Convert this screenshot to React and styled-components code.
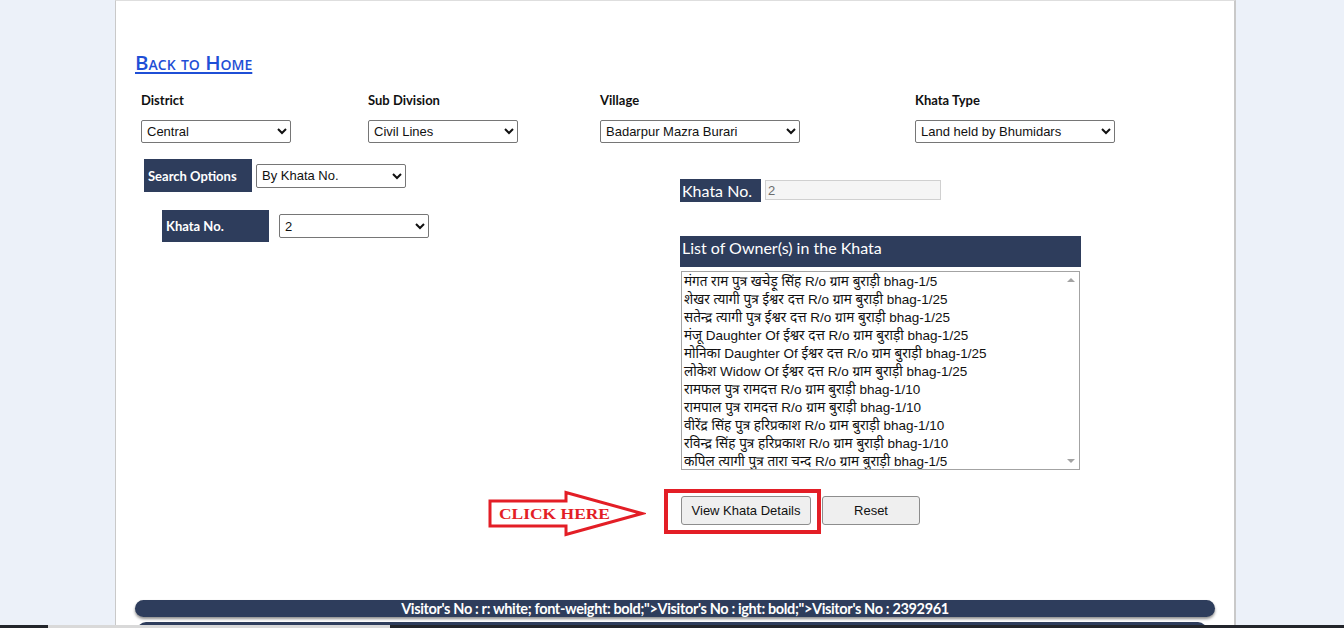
import React from 'react';
import styled, { createGlobalStyle } from 'styled-components';

const GlobalStyle = createGlobalStyle`
  html, body { margin:0; padding:0; background:#ecf1f9; }
  body { font-family: "Liberation Sans", Arial, sans-serif; overflow:hidden; }
`

const Page = styled.div`
  margin-left:115px;
  width:1080px;
  min-height:640px;
  background:#fff;
  border-left:1px solid #c9c9c9;
  border-right:2px solid #c9c9c9;
  border-top:1px solid #dedede;
  padding:48px 19px 0 19px;
  box-sizing:content-box;
`

const BackLink = styled.a`
  display:inline-block;
  font-family: "Open Sans", sans-serif;
  font-variant: small-caps;
  font-weight:600;
  font-size:20.5px;
  line-height:26px;
  color:#1f4fd6;
  text-decoration:underline;
  text-underline-offset:2px;
`

const FilterGrid = styled.div`
  display:grid;
  grid-template-columns:227px 232px 315px 1fr;
  padding-left:6px;
  margin-top:17px;
`

const FieldLabel = styled.div`
  font-family: Lato, sans-serif;
  font-weight:700;
  font-size:13px;
  line-height:16px;
  color:#111;
  margin-bottom:12px;
`

const Select = styled.select`
  width:${p => p.$w || 150}px;
  height:${p => p.$h || 23}px;
  font-family: "Liberation Sans", Arial, sans-serif;
  font-size:13px;
  color:#111;
  background:#fff;
  border:1px solid #767676;
  border-radius:2px;
  padding:0 1px;
`

const Lower = styled.div`
  display:grid;
  grid-template-columns:540px 1fr;
  margin-top:16px;
`

const LeftCol = styled.div`
  display:flex;
  flex-direction:column;
`

const OptionRow = styled.div`
  display:flex;
  align-items:center;
  gap:${p => p.$gap}px;
  padding-left:${p => p.$indent}px;
  margin-top:${p => p.$top || 0}px;
`

const DarkTag = styled.div`
  width:${p => p.$w}px;
  height:${p => p.$h}px;
  box-sizing:border-box;
  background:#2e3d5c;
  color:#fff;
  font-family: Lato, sans-serif;
  font-weight:700;
  font-size:13px;
  display:flex;
  align-items:center;
  padding-left:4px;
`

const RightCol = styled.div`
  display:flex;
  flex-direction:column;
  padding-left:5px;
  padding-top:20px;
`

const KhataRow = styled.div`
  display:flex;
  align-items:flex-start;
  gap:4px;
`

const HeadTag = styled.div`
  width:${p => p.$w}px;
  height:${p => p.$h}px;
  background:#2e3d5c;
  color:#fff;
  font-family: Lato, sans-serif;
  font-size:16px;
  line-height:${p => p.$lh || 24}px;
  padding-left:2px;
  box-sizing:border-box;
  margin-top:${p => p.$top || 0}px;
`

const TextInput = styled.input`
  width:176px;
  height:20px;
  box-sizing:border-box;
  margin-top:1px;
  border:1px solid #d0d0d0;
  background:#f5f5f5;
  color:#6d6d6d;
  font-family: "Liberation Sans", Arial, sans-serif;
  font-size:13px;
  padding:0 2px;
`

const ListBox = styled.div`
  margin:4px 0 0 1px;
  width:399px;
  height:199px;
  box-sizing:border-box;
  border:1px solid #a3a3a3;
  display:flex;
  background:#fff;
  overflow:hidden;
`

const Items = styled.div`
  flex:1;
  padding:1px 0 0 2px;
`

const Item = styled.div`
  font-family: "Liberation Sans", "Noto Sans Devanagari", "Noto Sans", sans-serif;
  font-size:13.5px;
  line-height:18px;
  color:#111;
  white-space:nowrap;
`

const Rail = styled.div`
  width:16px;
  display:flex;
  flex-direction:column;
  justify-content:space-between;
  align-items:center;
  padding:6px 0;
`

const Tri = styled.div`
  width:0; height:0;
  border-left:4px solid transparent;
  border-right:4px solid transparent;
  ${p => p.$down ? 'border-top:4px solid #a3a3a3;' : 'border-bottom:4px solid #a3a3a3;'}
`

const ButtonRow = styled.div`
  position:relative;
  display:flex;
  gap:11px;
  margin:26px 0 0 1px;
`

const Button = styled.button`
  width:${p => p.$w}px;
  height:29px;
  background:#efefef;
  border:1px solid #8d8d8d;
  border-radius:3px;
  font-family: "Liberation Sans", Arial, sans-serif;
  font-size:13px;
  color:#111;
  position:relative;
  z-index:1;
`

const Highlight = styled.div`
  position:absolute;
  left:-17px;
  top:-7px;
  width:157px;
  height:45px;
  box-sizing:border-box;
  border:4px solid #e31e26;
  z-index:2;
  pointer-events:none;
`

const Arrow = styled.svg`
  position:absolute;
  left:-193px;
  top:-6px;
`

const VisitorBar = styled.div`
  margin-top:75px;
  height:17px;
  border-radius:9px;
  background:#2e3d5c;
  box-shadow:0 2px 3px rgba(0,0,0,0.45);
  color:#fff;
  font-family: Lato, sans-serif;
  font-weight:700;
  font-size:14.5px;
  line-height:17px;
  text-align:center;
  letter-spacing:-0.35px;
  white-space:nowrap;
`

const NextBar = styled.div`
  margin:5px 8px 0 2px;
  height:17px;
  border-radius:9px 9px 0 0;
  background:#2e3d5c;
`

const TaskStrip = styled.div`
  position:fixed;
  left:0; right:0; bottom:0;
  height:3px;
  display:flex;
  background:#22252b;
  span{ margin-left:48px; width:342px; background:#d9d9d9; }
`

const owners = [
  'मंगत राम पुत्र खचेड़ू सिंह R/o ग्राम बुराड़ी bhag-1/5',
  'शेखर त्यागी पुत्र ईश्वर दत्त R/o ग्राम बुराड़ी bhag-1/25',
  'सतेन्द्र त्यागी पुत्र ईश्वर दत्त R/o ग्राम बुराड़ी bhag-1/25',
  'मंजू Daughter Of ईश्वर दत्त R/o ग्राम बुराड़ी bhag-1/25',
  'मोनिका Daughter Of ईश्वर दत्त R/o ग्राम बुराड़ी bhag-1/25',
  'लोकेश Widow Of ईश्वर दत्त R/o ग्राम बुराड़ी bhag-1/25',
  'रामफल पुत्र रामदत्त R/o ग्राम बुराड़ी bhag-1/10',
  'रामपाल पुत्र रामदत्त R/o ग्राम बुराड़ी bhag-1/10',
  'वीरेंद्र सिंह पुत्र हरिप्रकाश R/o ग्राम बुराड़ी bhag-1/10',
  'रविन्द्र सिंह पुत्र हरिप्रकाश R/o ग्राम बुराड़ी bhag-1/10',
  'कपिल त्यागी पुत्र तारा चन्द R/o ग्राम बुराड़ी bhag-1/5',
]

const filters = [
  { label:'District', value:'Central', w:150 },
  { label:'Sub Division', value:'Civil Lines', w:150 },
  { label:'Village', value:'Badarpur Mazra Burari', w:200 },
  { label:'Khata Type', value:'Land held by Bhumidars', w:200 },
]

const App = () => {
  return (
    <>
      <GlobalStyle />
      <Page>
        <BackLink href="#">Back to Home</BackLink>

        <FilterGrid>
          {filters.map(f => (
            <div key={f.label}>
              <FieldLabel>{f.label}</FieldLabel>
              <Select $w={f.w} defaultValue={f.value}>
                <option>{f.value}</option>
              </Select>
            </div>
          ))}
        </FilterGrid>

        <Lower>
          <LeftCol>
            <OptionRow $indent={9} $gap={4}>
              <DarkTag $w={108} $h={33}>Search Options</DarkTag>
              <Select $h={24} defaultValue="By Khata No.">
                <option>By Khata No.</option>
              </Select>
            </OptionRow>
            <OptionRow $indent={27} $gap={10} $top={18}>
              <DarkTag $w={107} $h={32}>Khata No.</DarkTag>
              <Select $h={24} defaultValue="2">
                <option>2</option>
              </Select>
            </OptionRow>
          </LeftCol>

          <RightCol>
            <KhataRow>
              <HeadTag $w={81} $h={23} $lh={23}>Khata No.</HeadTag>
              <TextInput value="2" disabled readOnly />
            </KhataRow>
            <HeadTag $w={401} $h={31} $top={34}>List of Owner(s) in the Khata</HeadTag>
            <ListBox>
              <Items>
                {owners.map((o, i) => <Item key={i}>{o}</Item>)}
              </Items>
              <Rail>
                <Tri />
                <Tri $down />
              </Rail>
            </ListBox>
            <ButtonRow>
              <Arrow width="158" height="47" viewBox="0 0 158 47">
                <polygon points="2,11 78,11 78,2.5 154,23.5 78,44.5 78,36 2,36" fill="#fff" stroke="#e31e26" strokeWidth="3" strokeLinejoin="miter" />
                <text x="11" y="29" textLength="111" lengthAdjust="spacingAndGlyphs" fill="#e31e26" fontFamily="'Liberation Serif', serif" fontWeight="700" fontSize="15">CLICK HERE</text>
              </Arrow>
              <Highlight />
              <Button $w={130}>View Khata Details</Button>
              <Button $w={98}>Reset</Button>
            </ButtonRow>
          </RightCol>
        </Lower>

        <VisitorBar>Visitor's No : r: white; font-weight: bold;"&gt;Visitor's No : ight: bold;"&gt;Visitor's No : 2392961</VisitorBar>
        <NextBar />
      </Page>
      <TaskStrip><span /></TaskStrip>
    </>
  );
};

export default App;
